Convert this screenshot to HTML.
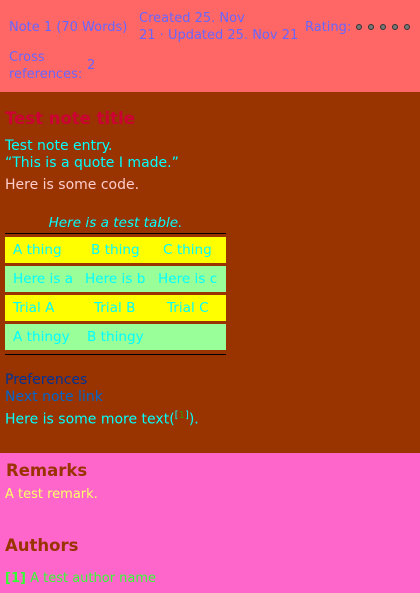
<!DOCTYPE html>
<html><head><style>
*{margin:0;padding:0;box-sizing:border-box}
body{width:420px;height:593px;overflow:hidden;font-family:"DejaVu Sans","Liberation Sans",sans-serif;background:#993300;position:relative}
.a{position:absolute;white-space:nowrap}
.h{color:#6666ff;font-size:13px;line-height:17px}
.dot{position:absolute;top:24px;width:6px;height:6px;border-radius:50%;background:#777;border:1px solid #333}
.row{position:absolute;left:5px;width:221px;height:26px}
.row span{position:absolute;top:5px;color:#00ffff;font-size:13.6px}
</style></head><body>
<div class="a" style="left:0;top:0;width:420px;height:92px;background:#ff6666"></div>
<div class="a h" style="left:9px;top:19px">Note 1 (70 Words)</div>
<div class="a h" style="left:139px;top:10px">Created 25. Nov<br>21 · Updated 25. Nov 21</div>
<div class="a h" style="left:305px;top:19px">Rating:</div>
<div class="dot" style="left:356px"></div><div class="dot" style="left:368px"></div><div class="dot" style="left:380px"></div><div class="dot" style="left:392px"></div><div class="dot" style="left:404px"></div>
<div class="a h" style="left:9px;top:49px;line-height:17px">Cross<br>references:</div>
<div class="a h" style="left:87px;top:57px">2</div>

<div class="a" style="left:5px;top:109px;font-weight:bold;font-size:16.5px;color:#cc0033">Test note title</div>
<div class="a" style="left:5px;top:138px;font-size:14px;line-height:17px;color:#00ffff">Test note entry.<br>“This is a quote I made.”</div>
<div class="a" style="left:5px;top:177px;font-size:14px;color:#ffcccc">Here is some code.</div>
<div class="a" style="left:5px;width:221px;top:215px;text-align:center;font-style:italic;font-size:13.6px;color:#00ffff">Here is a test table.</div>
<div class="a" style="left:5px;width:221px;top:233px;height:1px;background:#000"></div>
<div class="row" style="top:237px;background:#ffff00"><span style="left:8px">A thing</span><span style="left:86px">B thing</span><span style="left:158px">C thing</span></div>
<div class="row" style="top:266px;background:#99ff99"><span style="left:8px">Here is a</span><span style="left:80px">Here is b</span><span style="left:153px">Here is c</span></div>
<div class="row" style="top:295px;background:#ffff00"><span style="left:8px">Trial A</span><span style="left:89px">Trial B</span><span style="left:162px">Trial C</span></div>
<div class="row" style="top:324px;background:#99ff99"><span style="left:8px">A thingy</span><span style="left:82px">B thingy</span></div>
<div class="a" style="left:5px;width:221px;top:354px;height:1px;background:#000"></div>
<div class="a" style="left:5px;top:372px;font-size:14px;line-height:17px;color:#003399">Preferences</div>
<div class="a" style="left:5px;top:389px;font-size:14px;line-height:17px;color:#0066cc">Next note link</div>
<div class="a" style="left:5px;top:410px;font-size:14px;color:#00ffff">Here is some more text(<sup style="font-size:10px;color:#00ffff">[<span style="color:#339900">1</span>]</sup>).</div>

<div class="a" style="left:0;top:453px;width:420px;height:140px;background:#ff66cc"></div>
<div class="a" style="left:6px;top:461px;font-weight:bold;font-size:16.5px;color:#993300">Remarks</div>
<div class="a" style="left:5px;top:487px;font-size:13px;color:#ffff66">A test remark.</div>
<div class="a" style="left:5px;top:536px;font-weight:bold;font-size:16.5px;color:#993300">Authors</div>
<div class="a" style="left:5px;top:571px;font-size:13px;color:#33ff33"><b>[1]</b> A test author name</div>
</body></html>
